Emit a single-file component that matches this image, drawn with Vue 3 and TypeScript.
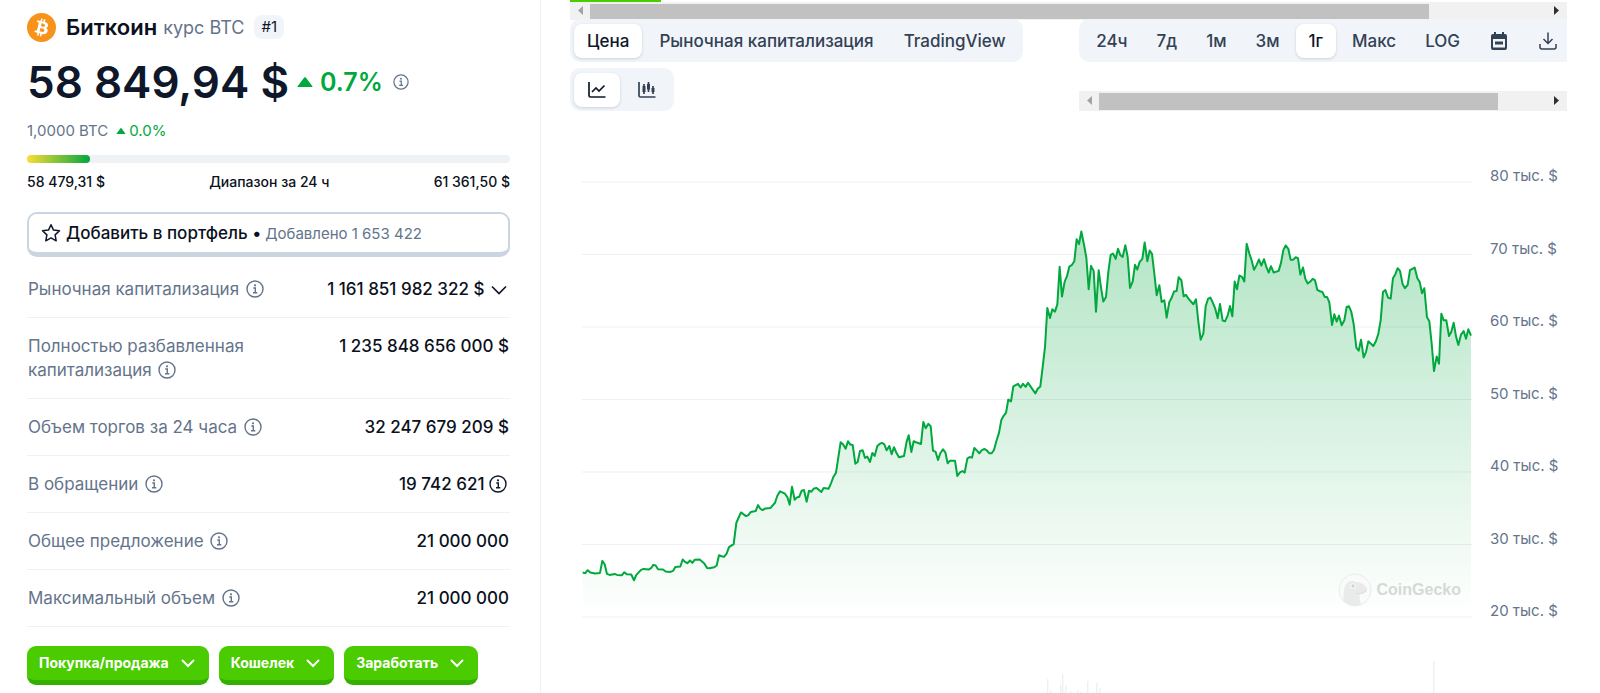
<script setup lang="ts">
import { computed, ref } from 'vue'

interface Stat {
  label: string
  value: string
  extra?: 'chevron' | 'info'
}

const stats: Stat[] = [
  { label: 'Рыночная капитализация', value: '1 161 851 982 322 $', extra: 'chevron' },
  { label: 'Полностью разбавленная капитализация', value: '1 235 848 656 000 $' },
  { label: 'Объем торгов за 24 часа', value: '32 247 679 209 $' },
  { label: 'В обращении', value: '19 742 621', extra: 'info' },
  { label: 'Общее предложение', value: '21 000 000' },
  { label: 'Максимальный объем', value: '21 000 000' },
]

const actions = ['Покупка/продажа', 'Кошелек', 'Заработать']
const views = ['Цена', 'Рыночная капитализация', 'TradingView']
const ranges = ['24ч', '7д', '1м', '3м', '1г', 'Макс', 'LOG']
const view = ref('Цена')
const range = ref('1г')
const style = ref<'line' | 'candles'>('line')

const axis = [80, 70, 60, 50, 40, 30, 20]

const PLOT_W = 2670
const PLOT_H = 1302

// Each quarter of the year keeps its samples relative to its own origin.
const quarters: { x: number; y: number; samples: string }[] = [
  {
    x: -36,
    y: 894,
    samples:
      '38,275 46,277 53,268 61,275 75,278 90,276 97,240 104,250 111,279 119,282 134,279 141,282 156,283 163,274 170,280 184,281 192,298 199,282 213,267 221,264 236,266 243,262 250,252 257,254 264,265 279,266 287,272 301,273 309,270 316,258 331,257 338,236 345,243 352,247 360,239 367,246 374,237 389,236 403,248 411,261 418,262 433,259 440,254 447,223 455,226 462,228 470,218 477,199 491,190 499,126 513,95 528,106 535,103 542,94 557,91 564,73 571,84 578,88 586,83 601,82 615,66 622,45 630,32 645,39 652,49 659,72 666,18 674,57 681,50 688,48',
  },
  {
    x: 654,
    y: 654,
    samples:
      '5,270 12,268 20,303 27,270 34,273 42,263 50,262 64,274 71,262 86,264 93,248 100,229 108,216 115,170 122,125 129,131 137,144 144,122 151,132 158,133 166,189 173,184 180,151 188,149 195,172 202,168 210,184 217,157 224,166 232,136 239,130 246,127 253,131 260,149 268,136 275,161 282,140 290,158 297,170 312,166 320,123 326,104 334,154 341,122 348,125 363,130 370,64 377,83 385,70 392,77 399,150 407,154 414,178 421,158 429,146 436,155 443,188 450,180 465,180 472,226 480,215 487,211 494,216 502,174 509,169 516,171 523,142 531,150 538,158 545,149 553,145 560,149 568,158 575,158 582,148 589,122 597,97 604,58 611,46 618,37',
  },
  {
    x: 1254,
    y: 84,
    samples:
      '25,567 33,573 40,528 54,520 62,531 69,520 77,529 84,517 91,527 106,549 113,535 121,528 128,470 135,410 142,293 150,323 157,297 165,304 172,282 179,170 186,259 194,214 201,198 208,169 215,165 223,153 230,87 237,102 244,64 252,104 259,142 266,237 273,167 281,182 288,304 296,180 303,232 310,274 318,260 325,185 332,134 339,130 347,146 354,116 361,135 368,140 376,105 383,140 390,233 398,214 405,164 412,178 419,155 427,146 434,97 442,153 449,121 456,131 463,190 470,255 478,225 485,275 493,270 500,322 508,275 514,265 522,244 530,242 536,201 544,210 551,258 558,254 566,266 580,282 588,267 595,334 602,388 610,370 617,288 624,266 631,262 638,276 646,296 653,324 660,281 668,331 675,333 683,316 690,287 697,318 704,214 711,237 718,196 726,200 733,214',
  },
  {
    x: 1914,
    y: 114,
    samples:
      '80,71 88,100 95,121 102,149 110,134 117,118 124,136 132,117 139,140 146,157 153,138 161,157 176,152 183,128 190,90 197,76 205,86 212,119 219,119 227,111 234,114 241,163 249,142 256,176 263,190 271,184 278,176 285,180 292,209 300,213 307,215 314,230 321,230 328,246 336,314 343,282 350,304 357,286 365,315 373,300 380,260 387,258 394,275 401,311 409,382 416,391 423,358 431,411 438,395 445,363 453,370 460,377 468,362 475,340 482,300 489,215 496,209 504,232 512,235 519,174 526,162 533,144 540,152 548,192 555,204 563,194 570,150 584,142 592,174 599,185 606,219 613,204 621,291 628,303 635,370 642,452 650,408 657,430 664,280 671,300 679,300 687,347 694,334 701,307 708,348 715,374 723,343 731,332 738,355 745,327 753,346',
  },
]

const points = computed(() =>
  quarters.flatMap((q) =>
    q.samples.split(' ').map((s) => {
      const [x, y] = s.split(',').map(Number)
      return [x + q.x, y + q.y]
    }),
  ),
)
const linePath = computed(() => 'M' + points.value.map((p) => p.join(' ')).join('L'))
const areaPath = computed(() => {
  const last = points.value[points.value.length - 1][0]
  return `${linePath.value}L${last} ${PLOT_H}L${points.value[0][0]} ${PLOT_H}Z`
})
const gridLines = axis.map((_, i) => (PLOT_H / (axis.length - 1)) * i)

// Volume columns: position along the plot and height
const volume = [
  [465, 14], [468, 3], [478, 8], [480, 19], [483, 7], [488, 2], [495, 3], [498, 1], [505, 12], [514, 10], [517, 5], [851, 32],
]
</script>

<template>
  <main class="page">
    <section class="summary">
      <h1 class="title">
        <svg class="coin" viewBox="0 0 32 32" aria-hidden="true">
          <circle cx="16" cy="16" r="16" fill="#f7931a" />
          <path
            fill="#fff"
            d="M23.189 14.02c.314-2.096-1.283-3.223-3.465-3.975l.708-2.84-1.728-.43-.69 2.765c-.454-.114-.92-.22-1.385-.326l.695-2.783L15.596 6l-.708 2.839c-.376-.086-.746-.17-1.104-.26l.002-.009-2.384-.595-.46 1.846s1.283.294 1.256.312c.7.175.826.638.805 1.006l-.806 3.235c.048.012.11.03.18.057l-.183-.045-1.13 4.532c-.086.212-.303.531-.793.41.018.025-1.256-.313-1.256-.313l-.858 1.978 2.25.561c.418.105.828.215 1.231.318l-.715 2.872 1.727.43.708-2.84c.472.127.93.245 1.378.357l-.706 2.828 1.728.43.715-2.866c2.948.558 5.164.333 6.097-2.333.752-2.146-.037-3.385-1.588-4.192 1.13-.26 1.98-1.003 2.207-2.538zm-3.95 5.538c-.533 2.147-4.148.986-5.32.695l.95-3.805c1.172.293 4.929.872 4.37 3.11zm.535-5.569c-.487 1.953-3.495.96-4.47.717l.86-3.45c.975.243 4.118.696 3.61 2.733z"
          />
        </svg>
        <span class="name">Биткоин</span>
        <span class="ticker">курс BTC</span>
        <span class="rank">#1</span>
      </h1>

      <div class="price-row">
        <span class="price">58 849,94 $</span>
        <svg class="up" viewBox="0 0 16 10" aria-hidden="true"><path d="M1.200 10Q0 10 .8 9L7.200 .6Q8-.3 8.800 .6L15.200 9Q16 10 14.800 10Z" /></svg>
        <span class="change">0.7%</span>
        <svg class="info small" viewBox="0 0 18 18" aria-hidden="true">
          <circle cx="9" cy="9" r="8" /><path d="M7.300 8H9.300V12.500M7 12.700H11.300" /><circle class="dot" cx="9" cy="5.300" r="1.100" />
        </svg>
      </div>

      <div class="btc-row">
        <span>1,0000 BTC</span>
        <svg class="up tiny" viewBox="0 0 16 10" aria-hidden="true"><path d="M1.200 10Q0 10 .8 9L7.200 .6Q8-.3 8.800 .6L15.200 9Q16 10 14.800 10Z" /></svg>
        <span class="green">0.0%</span>
      </div>

      <div class="bar"><div class="fill" :style="{ width: '13%' }"></div></div>
      <div class="range-row">
        <span>58 479,31 $</span><span>Диапазон за 24 ч</span><span>61 361,50 $</span>
      </div>

      <button type="button" class="portfolio">
        <svg class="star" viewBox="0 0 20 20" aria-hidden="true">
          <path d="M10 1.700L12.500 7.100L18.500 7.800L14.100 11.900L15.200 17.800L10 14.900L4.800 17.800L5.900 11.900L1.500 7.800L7.500 7.100Z" />
        </svg>
        <span class="add">Добавить в портфель •</span>
        <span class="added">Добавлено 1 653 422</span>
      </button>

      <table class="stats">
        <tbody>
          <tr v-for="s in stats" :key="s.label">
            <th scope="row">
              {{ s.label }}
              <svg class="info" viewBox="0 0 18 18" aria-hidden="true">
                <circle cx="9" cy="9" r="8" /><path d="M7.300 8H9.300V12.500M7 12.700H11.300" /><circle class="dot" cx="9" cy="5.300" r="1.100" />
              </svg>
            </th>
            <td>
              {{ s.value }}
              <svg v-if="s.extra === 'chevron'" class="chevron" viewBox="0 0 18 18" aria-hidden="true"><path d="M2 5.500L9 12.500L16 5.500" /></svg>
              <svg v-if="s.extra === 'info'" class="info dark" viewBox="0 0 18 18" aria-hidden="true">
                <circle cx="9" cy="9" r="8" /><path d="M7.300 8H9.300V12.500M7 12.700H11.300" /><circle class="dot" cx="9" cy="5.300" r="1.100" />
              </svg>
            </td>
          </tr>
        </tbody>
      </table>

      <div class="actions">
        <button v-for="a in actions" :key="a" type="button">
          {{ a }}
          <svg viewBox="0 0 16 16" aria-hidden="true"><path d="M2 5L8 11L14 5" /></svg>
        </button>
      </div>
    </section>

    <section class="market">
      <div class="tab-line"></div>
      <div class="scroll">
        <button type="button" aria-label="Влево"><svg viewBox="0 0 8 10"><path class="off" d="M7 0V9L2 4.500Z" /></svg></button>
        <div class="track"><div class="thumb" :style="{ width: '87.700%' }"></div></div>
        <button type="button" aria-label="Вправо"><svg viewBox="0 0 8 10"><path d="M1 0V9L6 4.500Z" /></svg></button>
      </div>

      <div class="toolbar">
        <div class="left">
          <div class="group">
            <button v-for="v in views" :key="v" type="button" :class="{ active: view === v }" @click="view = v">{{ v }}</button>
          </div>
          <div class="group">
            <button type="button" aria-label="Линия" :class="{ active: style === 'line' }" @click="style = 'line'">
              <svg class="icon" viewBox="0 0 20 20"><path class="ln" d="M2 2V15.500Q2 17 3.500 17H18.500M5 12L9 8L12 11L17.500 5.500" /></svg>
            </button>
            <button type="button" aria-label="Свечи" :class="{ active: style === 'candles' }" @click="style = 'candles'">
              <svg class="icon" viewBox="0 0 20 20">
                <path class="ln" d="M2 2V15.500Q2 17 3.500 17H18.500M7 4V14M11.500 2V12M16 6V14" />
                <path d="M5.500 6H8.500V12H5.500ZM10 4H13V9.500H10ZM14.500 8H17.500V12H14.500Z" />
              </svg>
            </button>
          </div>
        </div>
        <div class="right">
          <div class="group ranges">
            <button v-for="r in ranges" :key="r" type="button" :class="{ active: range === r }" @click="range = r">{{ r }}</button>
            <button type="button" aria-label="Календарь">
              <svg class="icon" viewBox="0 0 20 20">
                <path fill-rule="evenodd" d="M5 1H7V3H13V1H15V3H16Q18 3 18 5V17Q18 19 16 19H4Q2 19 2 17V5Q2 3 4 3H5ZM4 8V16.500H16V8ZM6 10.500H14V13.500H6Z" />
              </svg>
            </button>
            <button type="button" class="last" aria-label="Скачать">
              <svg class="icon" viewBox="0 0 20 20"><path class="ln thin" d="M10 1.500V12.500M5.500 8L10 12.500L14.500 8M2 13V16Q2 18 4 18H16Q18 18 18 16V13" /></svg>
            </button>
          </div>
          <div class="scroll">
            <button type="button" aria-label="Влево"><svg viewBox="0 0 8 10"><path class="off" d="M7 0V9L2 4.500Z" /></svg></button>
            <div class="track"><div class="thumb" :style="{ width: '89%' }"></div></div>
            <button type="button" aria-label="Вправо"><svg viewBox="0 0 8 10"><path d="M1 0V9L6 4.500Z" /></svg></button>
          </div>
        </div>
      </div>

      <div class="chart">
        <div class="plot">
          <svg class="series" :viewBox="`0 0 ${PLOT_W} ${PLOT_H}`" preserveAspectRatio="none" role="img" aria-label="Курс BTC за год">
            <defs>
              <linearGradient id="area" x1="0" y1="0" x2="0" y2="1">
                <stop offset="0" stop-color="#00a83e" stop-opacity="0.3" />
                <stop offset="1" stop-color="#00a83e" stop-opacity="0" />
              </linearGradient>
            </defs>
            <line v-for="y in gridLines" :key="y" class="grid" x1="0" :x2="PLOT_W" :y1="y" :y2="y" />
            <path :d="areaPath" fill="url(#area)" />
            <path :d="linePath" class="price-line" />
          </svg>
          <div class="watermark">
            <svg viewBox="0 0 34 34" aria-hidden="true">
              <circle cx="17" cy="17" r="16" fill="#fafafa" stroke="#e9ecea" />
              <path fill="#e9eaea" d="M5.500 28C5 23 6 17 7 13C9 8 14 7 18 9C23 9 27 12 29 15C30 19 26 21 22 21C21 24 22 28 23 31.500C17 34 10 32 5.500 28Z" />
              <circle cx="15" cy="13" r="2.600" fill="#fff" /><circle cx="15" cy="13" r="1.800" fill="#cfd1d0" />
              <path d="M18 20Q25 22 28 17" fill="none" stroke="#dcdedd" />
            </svg>
            CoinGecko
          </div>
        </div>
        <div class="axis"><span v-for="a in axis" :key="a">{{ a }} тыс. $</span></div>
        <svg class="volume" viewBox="0 0 890 32" preserveAspectRatio="none" aria-hidden="true">
          <rect v-for="v in volume" :key="v[0]" :x="v[0]" :y="32 - v[1]" width="1.500" :height="v[1]" />
        </svg>
      </div>
    </section>
  </main>
</template>

<style>
body {
  margin: 0;
  background: #fff;
}
</style>

<style scoped>
* {
  box-sizing: border-box;
}
.page {
  display: grid;
  grid-template-columns: minmax(0, 541fr) minmax(0, 1059fr);
  font-family: Inter, "Liberation Sans", sans-serif;
  color: #0b1120;
}
button {
  font: inherit;
  color: inherit;
  border: 0;
  background: none;
  padding: 0;
  cursor: pointer;
}
svg {
  display: block;
  flex: none;
}
.summary {
  padding: 12px 30px 8px 27px;
  border-right: 1px solid #eff2f5;
}
.title {
  display: flex;
  align-items: center;
  margin: 0;
  height: 30px;
  font-weight: 400;
}
.coin {
  width: 29px;
  height: 29px;
}
.name {
  margin-left: 10px;
  font-size: 22px;
  font-weight: 600;
}
.ticker {
  margin-left: 6px;
  font-size: 18px;
  color: #64748b;
}
.rank {
  margin-left: 10px;
  padding: 0 7px;
  border-radius: 8px;
  background: #f1f5f9;
  font-size: 15px;
  line-height: 24px;
  color: #0f172a;
}
.price-row {
  display: flex;
  align-items: center;
  height: 56px;
  margin-top: 12px;
}
.price {
  font-size: 44px;
  font-weight: 600;
  line-height: 56px;
  color: #0f172a;
}
.up {
  width: 16px;
  height: 10px;
  margin-left: 8px;
  fill: #00a83e;
}
.up.tiny {
  width: 10px;
  height: 6px;
}
.change {
  margin: 0 10px 0 7px;
  font-size: 25px;
  font-weight: 600;
  color: #00a83e;
}
.info {
  display: inline-block;
  width: 18px;
  height: 18px;
  margin-left: 2px;
  vertical-align: -3px;
  fill: none;
  stroke: #64748b;
  stroke-width: 1.4;
}
.info.small {
  width: 16px;
  height: 16px;
  margin-left: 0;
}
.info.dark {
  margin: 0 2px 0 0;
  stroke: #0f172a;
}
.dot {
  fill: #64748b;
  stroke: none;
}
.dark .dot {
  fill: #0f172a;
}
.btc-row {
  display: flex;
  align-items: center;
  margin-top: 11px;
  font-size: 15px;
  line-height: 20px;
  color: #64748b;
}
.green {
  margin-left: 3px;
  color: #00a83e;
}
.bar {
  height: 8px;
  margin-top: 14px;
  border-radius: 4px;
  background: #eff2f5;
}
.fill {
  height: 8px;
  border-radius: 4px;
  background: linear-gradient(90deg, #fddc35, #00a83e);
}
.range-row {
  display: flex;
  justify-content: space-between;
  margin-top: 9px;
  font-size: 14px;
  font-weight: 500;
  line-height: 20px;
}
.portfolio {
  display: flex;
  align-items: center;
  width: 100%;
  height: 45px;
  margin-top: 20px;
  padding: 0 12px;
  border: 2px solid #cbd5e1;
  border-bottom-width: 5px;
  border-radius: 10px;
}
.star {
  width: 20px;
  height: 20px;
  fill: none;
  stroke: #0f172a;
  stroke-width: 1.5;
  stroke-linejoin: round;
}
.add {
  margin-left: 5px;
  font-size: 17px;
  font-weight: 500;
}
.added {
  margin-left: 4px;
  font-size: 15px;
  color: #64748b;
}
.stats {
  width: 100%;
  margin-top: 4px;
  border-collapse: separate;
  border-spacing: 0;
  font-size: 17px;
  line-height: 24px;
}
.stats th,
.stats td {
  padding: 16px 1px;
  border-bottom: 1px solid #eff2f5;
  vertical-align: top;
}
.stats th {
  width: 55%;
  text-align: left;
  font-weight: 400;
  color: #64748b;
}
.stats td {
  text-align: right;
  font-weight: 500;
  white-space: nowrap;
}
.chevron {
  display: inline-block;
  width: 18px;
  height: 18px;
  margin: 0 1px;
  vertical-align: -4px;
  fill: none;
  stroke: #0f172a;
  stroke-width: 1.7;
}
.actions {
  display: flex;
  gap: 10px;
  margin-top: 19px;
}
.actions button {
  display: flex;
  align-items: center;
  gap: 11px;
  height: 39px;
  padding: 0 13px 1px 12px;
  border-bottom: 5px solid #35b000;
  border-radius: 9px;
  background: #4bcc00;
  font-size: 14px;
  font-weight: 700;
  color: #fff;
}
.actions svg {
  width: 16px;
  height: 16px;
  fill: none;
  stroke: #fff;
  stroke-width: 2;
}
.market {
  padding: 0 33px 0 29px;
}
.tab-line {
  width: 91px;
  height: 2px;
  background: #4bcc00;
}
.scroll {
  display: flex;
  height: 18px;
  background: #f1f1f1;
}
.scroll button {
  display: flex;
  align-items: center;
  justify-content: center;
  width: 20px;
}
.scroll svg {
  width: 8px;
  height: 10px;
  fill: #303030;
}
.scroll .off {
  fill: #a3a3a3;
}
.track {
  flex: 1;
  padding: 2px 0 1px;
}
.thumb {
  height: 100%;
  background: #c1c1c1;
}
.toolbar {
  display: flex;
  justify-content: space-between;
  margin-top: -1px;
}
.left {
  display: flex;
  flex-direction: column;
  align-items: flex-start;
  gap: 6px;
}
.group {
  display: flex;
  gap: 4px;
  padding: 5px 4px 4px;
  border-radius: 10px;
  background: #f1f5f9;
  font-size: 17px;
  font-weight: 500;
  color: #334155;
}
.group button {
  height: 34px;
  padding: 0 13px;
  border-radius: 8px;
}
.group .active {
  background: #fff;
  color: #0f172a;
  box-shadow: 0 1px 3px rgba(15, 23, 42, 0.16);
}
.ranges {
  gap: 3px;
  border-radius: 10px 0 0 10px;
  padding-right: 0;
}
.ranges .last {
  padding-right: 9px;
}
.icon {
  width: 20px;
  height: 20px;
  fill: currentColor;
}
.ln {
  fill: none;
  stroke: currentColor;
  stroke-width: 1.7;
}
.thin {
  stroke-width: 1.5;
}
.right .scroll {
  height: 20px;
  margin-top: 29px;
}
.chart {
  display: grid;
  grid-template-columns: minmax(0, 1fr) 77px;
  column-gap: 18px;
  margin-top: 56px;
  padding-left: 12px;
}
.plot {
  position: relative;
  padding: 15px 0 3px;
}
.series {
  width: 100%;
  height: 435px;
  overflow: visible;
}
.grid {
  stroke: #eceff3;
  stroke-width: 1px;
  vector-effect: non-scaling-stroke;
}
.price-line {
  fill: none;
  stroke: #00a83e;
  stroke-width: 2px;
  stroke-linejoin: round;
  vector-effect: non-scaling-stroke;
}
.watermark {
  position: absolute;
  right: 11px;
  bottom: 13px;
  display: flex;
  align-items: center;
  gap: 5px;
  font-family: "Liberation Sans", Arial, sans-serif;
  font-size: 16px;
  font-weight: 700;
  color: #d6d9d7;
}
.watermark svg {
  width: 34px;
  height: 34px;
}
.axis {
  display: flex;
  flex-direction: column;
  justify-content: space-between;
  font-size: 15px;
  line-height: 18px;
  color: #64748b;
}
.volume {
  width: 100%;
  height: 32px;
  margin-top: 41px;
  fill: #edf1f5;
}
</style>
